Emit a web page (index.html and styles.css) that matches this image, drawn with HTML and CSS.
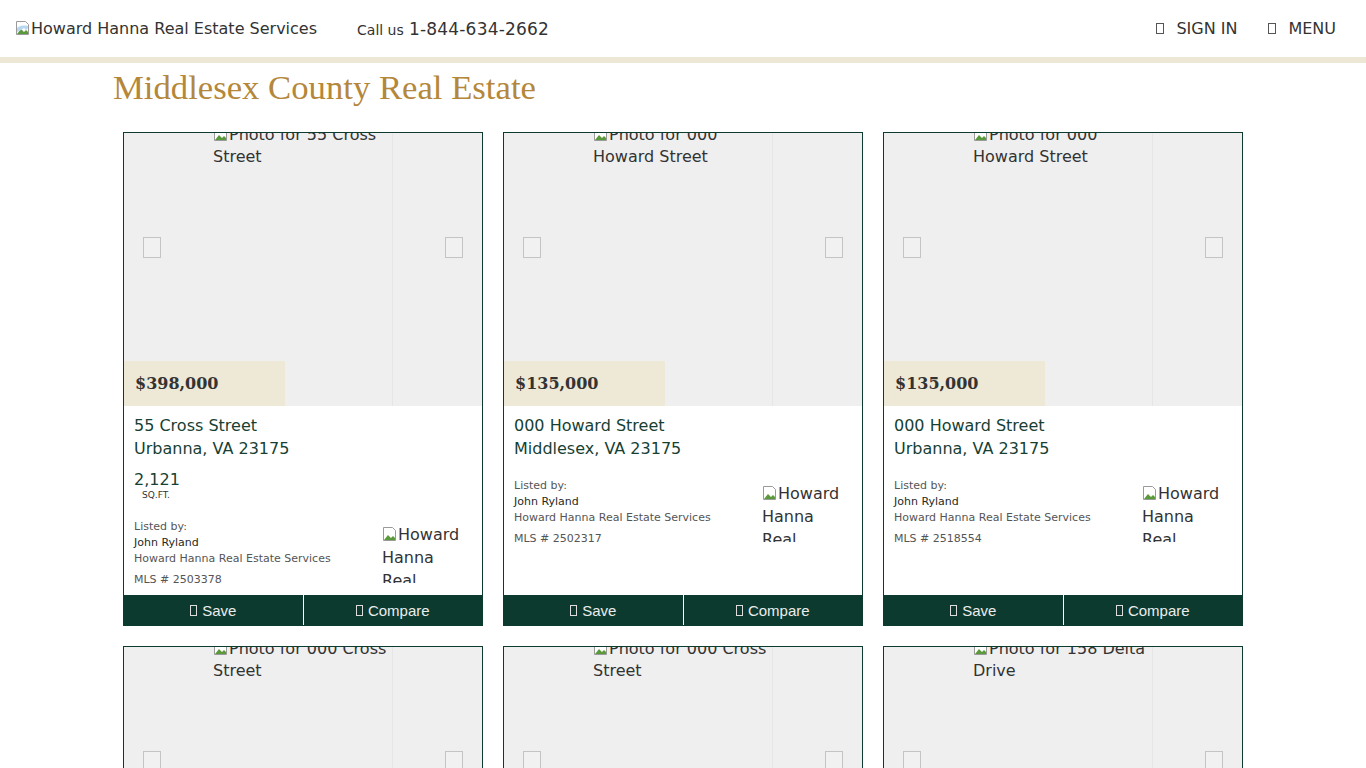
FILE: index.html
```html
<!DOCTYPE html>
<html lang="en">
<head>
<meta charset="utf-8">
<title>Middlesex County Real Estate</title>
<link rel="stylesheet" href="styles.css">
</head>
<body>
<header class="topbar">
  <div class="logo"><svg class="broken" viewBox="0 0 16 16" width="16" height="16"><path d="M1.5 1.5h9l3 3v10h-12z" fill="#fff" stroke="#9a9a9a"/><path d="M2 14l4-5 3 3 2-2 2 2v2z" fill="#5a9a3a"/><path d="M2 8c2-2 5-3 11-2v2l-2 2-2-2-3 2-4 2z" fill="#b8d8f0"/></svg>Howard Hanna Real Estate Services</div>
  <div class="call"><span class="call-label">Call us</span> <span class="phone">1-844-634-2662</span></div>
  <nav class="nav">
    <a class="nav-item"><span class="tofu"></span>SIGN IN</a>
    <a class="nav-item"><span class="tofu"></span>MENU</a>
  </nav>
</header>
<main class="page">
  <h1 class="title">Middlesex County Real Estate</h1>
  <section class="grid">
    <article class="card">
      <div class="media">
        <div class="photo"><svg class="broken" viewBox="0 0 16 16" width="16" height="16"><path d="M1.5 1.5h9l3 3v10h-12z" fill="#fff" stroke="#9a9a9a"/><path d="M2 14l4-5 3 3 2-2 2 2v2z" fill="#5a9a3a"/></svg>Photo for 55 Cross Street</div>
        <span class="arrow arrow-left"></span><span class="arrow arrow-right"></span>
        <div class="price">$398,000</div>
      </div>
      <div class="body">
        <div class="addr">55 Cross Street<br>Urbanna, VA 23175</div>
        <div class="sqft"><div class="sqft-num">2,121</div><div class="sqft-lbl">SQ.FT.</div></div>
        <div class="info">
          <div class="lister">Listed by:<br><span class="name">John Ryland</span><br>Howard Hanna Real Estate Services<div class="mls">MLS # 2503378</div></div>
          <div class="agentlogo"><svg class="broken" viewBox="0 0 16 16" width="16" height="16"><path d="M1.5 1.5h9l3 3v10h-12z" fill="#fff" stroke="#9a9a9a"/><path d="M2 14l4-5 3 3 2-2 2 2v2z" fill="#5a9a3a"/></svg>Howard Hanna Real Estate Services</div>
        </div>
      </div>
      <div class="actions"><a class="btn"><span class="tofu small"></span>Save</a><a class="btn"><span class="tofu small"></span>Compare</a></div>
    </article>
    <article class="card">
      <div class="media">
        <div class="photo"><svg class="broken" viewBox="0 0 16 16" width="16" height="16"><path d="M1.5 1.5h9l3 3v10h-12z" fill="#fff" stroke="#9a9a9a"/><path d="M2 14l4-5 3 3 2-2 2 2v2z" fill="#5a9a3a"/></svg>Photo for 000 Howard Street</div>
        <span class="arrow arrow-left"></span><span class="arrow arrow-right"></span>
        <div class="price">$135,000</div>
      </div>
      <div class="body">
        <div class="addr">000 Howard Street<br>Middlesex, VA 23175</div>
        <div class="info">
          <div class="lister">Listed by:<br><span class="name">John Ryland</span><br>Howard Hanna Real Estate Services<div class="mls">MLS # 2502317</div></div>
          <div class="agentlogo"><svg class="broken" viewBox="0 0 16 16" width="16" height="16"><path d="M1.5 1.5h9l3 3v10h-12z" fill="#fff" stroke="#9a9a9a"/><path d="M2 14l4-5 3 3 2-2 2 2v2z" fill="#5a9a3a"/></svg>Howard Hanna Real Estate Services</div>
        </div>
      </div>
      <div class="actions"><a class="btn"><span class="tofu small"></span>Save</a><a class="btn"><span class="tofu small"></span>Compare</a></div>
    </article>
    <article class="card">
      <div class="media">
        <div class="photo"><svg class="broken" viewBox="0 0 16 16" width="16" height="16"><path d="M1.5 1.5h9l3 3v10h-12z" fill="#fff" stroke="#9a9a9a"/><path d="M2 14l4-5 3 3 2-2 2 2v2z" fill="#5a9a3a"/></svg>Photo for 000 Howard Street</div>
        <span class="arrow arrow-left"></span><span class="arrow arrow-right"></span>
        <div class="price">$135,000</div>
      </div>
      <div class="body">
        <div class="addr">000 Howard Street<br>Urbanna, VA 23175</div>
        <div class="info">
          <div class="lister">Listed by:<br><span class="name">John Ryland</span><br>Howard Hanna Real Estate Services<div class="mls">MLS # 2518554</div></div>
          <div class="agentlogo"><svg class="broken" viewBox="0 0 16 16" width="16" height="16"><path d="M1.5 1.5h9l3 3v10h-12z" fill="#fff" stroke="#9a9a9a"/><path d="M2 14l4-5 3 3 2-2 2 2v2z" fill="#5a9a3a"/></svg>Howard Hanna Real Estate Services</div>
        </div>
      </div>
      <div class="actions"><a class="btn"><span class="tofu small"></span>Save</a><a class="btn"><span class="tofu small"></span>Compare</a></div>
    </article>
    <article class="card">
      <div class="media">
        <div class="photo"><svg class="broken" viewBox="0 0 16 16" width="16" height="16"><path d="M1.5 1.5h9l3 3v10h-12z" fill="#fff" stroke="#9a9a9a"/><path d="M2 14l4-5 3 3 2-2 2 2v2z" fill="#5a9a3a"/></svg>Photo for 000 Cross Street</div>
        <span class="arrow arrow-left"></span><span class="arrow arrow-right"></span>
        <div class="price">$95,000</div>
      </div>
      <div class="body">
        <div class="addr">000 Cross Street<br>Urbanna, VA 23175</div>
        <div class="info">
          <div class="lister">Listed by:<br><span class="name">John Ryland</span><br>Howard Hanna Real Estate Services<div class="mls">MLS # 2503379</div></div>
          <div class="agentlogo">Howard Hanna Real Estate Services</div>
        </div>
      </div>
      <div class="actions"><a class="btn"><span class="tofu small"></span>Save</a><a class="btn"><span class="tofu small"></span>Compare</a></div>
    </article>
    <article class="card">
      <div class="media">
        <div class="photo"><svg class="broken" viewBox="0 0 16 16" width="16" height="16"><path d="M1.5 1.5h9l3 3v10h-12z" fill="#fff" stroke="#9a9a9a"/><path d="M2 14l4-5 3 3 2-2 2 2v2z" fill="#5a9a3a"/></svg>Photo for 000 Cross Street</div>
        <span class="arrow arrow-left"></span><span class="arrow arrow-right"></span>
        <div class="price">$95,000</div>
      </div>
      <div class="body">
        <div class="addr">000 Cross Street<br>Urbanna, VA 23175</div>
        <div class="info">
          <div class="lister">Listed by:<br><span class="name">John Ryland</span><br>Howard Hanna Real Estate Services<div class="mls">MLS # 2503380</div></div>
          <div class="agentlogo">Howard Hanna Real Estate Services</div>
        </div>
      </div>
      <div class="actions"><a class="btn"><span class="tofu small"></span>Save</a><a class="btn"><span class="tofu small"></span>Compare</a></div>
    </article>
    <article class="card">
      <div class="media">
        <div class="photo"><svg class="broken" viewBox="0 0 16 16" width="16" height="16"><path d="M1.5 1.5h9l3 3v10h-12z" fill="#fff" stroke="#9a9a9a"/><path d="M2 14l4-5 3 3 2-2 2 2v2z" fill="#5a9a3a"/></svg>Photo for 158 Delta Drive</div>
        <span class="arrow arrow-left"></span><span class="arrow arrow-right"></span>
        <div class="price">$289,000</div>
      </div>
      <div class="body">
        <div class="addr">158 Delta Drive<br>Urbanna, VA 23175</div>
        <div class="info">
          <div class="lister">Listed by:<br><span class="name">John Ryland</span><br>Howard Hanna Real Estate Services<div class="mls">MLS # 2510021</div></div>
          <div class="agentlogo">Howard Hanna Real Estate Services</div>
        </div>
      </div>
      <div class="actions"><a class="btn"><span class="tofu small"></span>Save</a><a class="btn"><span class="tofu small"></span>Compare</a></div>
    </article>
  </section>
</main>
</body>
</html>
```

FILE: styles.css
```css
* { box-sizing: border-box; }
html, body { margin: 0; padding: 0; background: #fff; }
body { font-family: "DejaVu Sans", Verdana, sans-serif; color: #333; }

.topbar {
  display: flex;
  align-items: center;
  height: 63px;
  padding: 0 15px;
  border-bottom: 6px solid #ede8d6;
}
.broken { vertical-align: -2px; flex: none; }
.logo { font-size: 16px; color: #333; white-space: nowrap; }
.call { margin-left: 40px; color: #333; white-space: nowrap; }
.call-label { font-size: 14px; }
.phone { font-size: 17px; letter-spacing: 0.2px; }
.nav { margin-left: auto; display: flex; gap: 31px; margin-right: 15px; }
.nav-item { font-size: 16px; color: #333; display: flex; align-items: center; }
.tofu {
  display: inline-block;
  width: 8px; height: 11px;
  border: 1px solid #555;
  margin-right: 12px;
}

.page { width: 1140px; margin: 0 auto; }
.title {
  font-family: "Liberation Serif", "Times New Roman", serif;
  font-weight: normal;
  font-size: 34.7px;
  line-height: 40px;
  color: #b4873a;
  margin: 5px 0 24px 0;
}

.grid {
  display: grid;
  grid-template-columns: repeat(3, 360px);
  gap: 20px;
  padding: 0 10px 40px;
}
.card {
  border: 1px solid #0e3b30;
  display: flex;
  flex-direction: column;
  background: #fff;
}
.media {
  position: relative;
  height: 273px;
  background: #efefef;
  overflow: hidden;
}
.photo {
  width: 180px;
  height: 290px;
  margin: -9px 0 0 89px;
  font-size: 16px;
  line-height: 22px;
  color: #333;
  background: #efefef;
  border-right: 1px solid #e6e6e6;
}
.arrow {
  position: absolute;
  top: 104px;
  width: 18px; height: 21px;
  border: 1px solid #c4c4c4;
  background: #f1f1f1;
}
.arrow-left { left: 19px; }
.arrow-right { right: 19px; }
.price {
  position: absolute;
  left: 0; bottom: 0;
  width: 161px; height: 45px;
  background: #ede9d6;
  padding-left: 11px;
  font-family: "DejaVu Serif", Georgia, serif;
  font-weight: bold;
  font-size: 16px;
  line-height: 45px;
  color: #333;
}

.body {
  flex: 1;
  padding: 8px 11px 7px 10px;
  display: flex;
  flex-direction: column;
}
.addr {
  font-size: 16px;
  line-height: 23px;
  color: #173f33;
}
.sqft { margin-top: 10px; color: #173f33; }
.sqft-num { font-size: 16px; line-height: 20px; }
.sqft-lbl { font-size: 9px; line-height: 11px; padding-left: 8px; color: #333; }
.info {
  margin-top: 18px;
  display: flex;
  justify-content: space-between;
  align-items: flex-start;
}
.lister { font-size: 11px; line-height: 16px; color: #555; }
.name { color: #1f2a25; }
.mls { margin-top: 5px; }
.agentlogo {
  width: 89px;
  height: 60px;
  overflow: hidden;
  margin-top: 4px;
  font-size: 16px;
  line-height: 23px;
  color: #333;
}

.actions {
  display: flex;
  height: 30px;
  background: #0d3a2f;
}
.btn {
  flex: 1;
  display: flex;
  align-items: center;
  justify-content: center;
  font-family: "Liberation Sans", Arial, sans-serif;
  font-size: 15px;
  color: #ececec;
}
.btn + .btn { border-left: 1px solid #fff; }
.tofu.small { width: 7px; height: 11px; border-color: #ddd; margin-right: 5px; }
```
